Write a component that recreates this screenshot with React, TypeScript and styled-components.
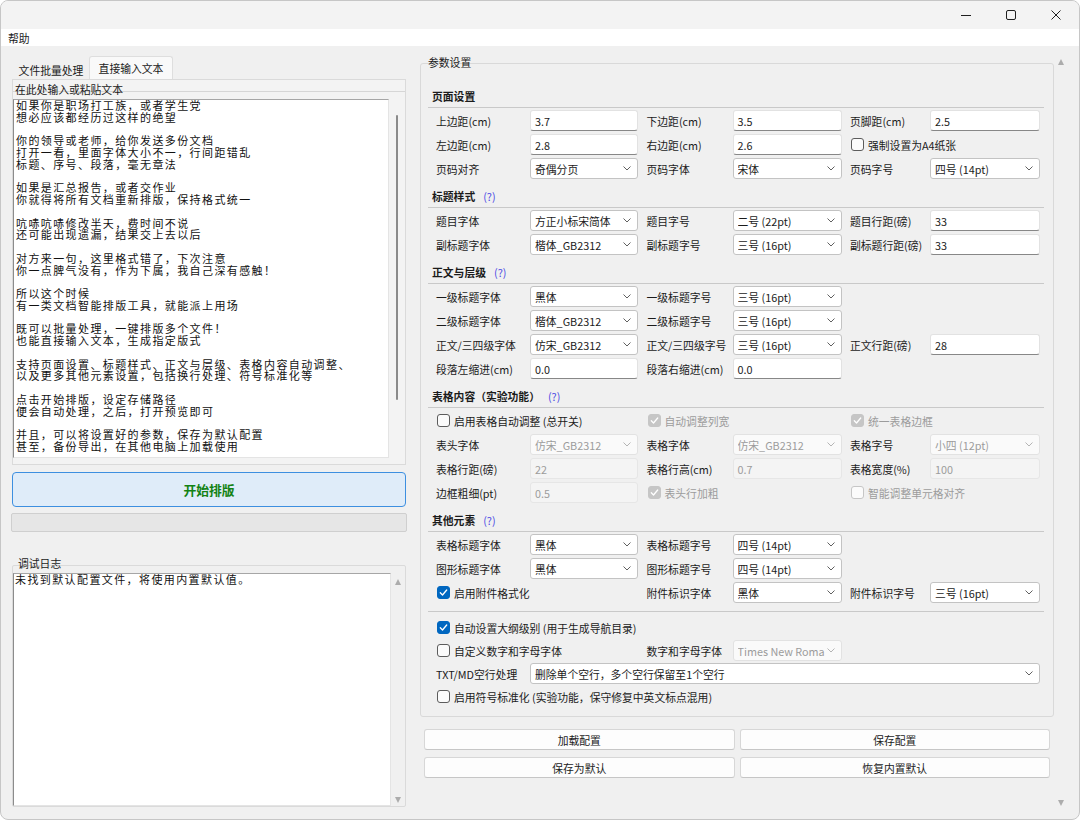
import * as React from "react";
import styled, { createGlobalStyle } from "styled-components";

const uiFont = `"Noto Sans CJK SC", "Noto Sans", sans-serif`;

const GlobalStyle = createGlobalStyle`
  html, body {
    margin: 0;
    padding: 0;
    background: #ffffff;
  }
  body {
    font-family: ${uiFont};
    font-size: 10.8px;
    color: #1b1b1b;
  }
  * {
    box-sizing: border-box;
  }
`;

const Window = styled.div`
  width: 1080px;
  height: 820px;
  border: 1px solid #c6c6c6;
  border-radius: 8px;
  background: #f0f0f0;
  overflow: hidden;
  display: flex;
  flex-direction: column;
`;

const TitleBar = styled.div`
  height: 28px;
  background: #f3f3f3;
  display: flex;
  justify-content: flex-end;
  padding-right: 1px;
`;

const WinButton = styled.div`
  width: 45px;
  display: flex;
  align-items: center;
  justify-content: center;
`;

const MenuBar = styled.div`
  height: 17px;
  background: #ffffff;
  display: flex;
  align-items: center;
  padding-left: 7px;
`;

const Body = styled.div`
  flex: 1;
  display: flex;
  min-height: 0;
`;

/* ---------- left column ---------- */

const LeftCol = styled.div`
  width: 413px;
  padding: 10px 8px 12px 11px;
  display: flex;
  flex-direction: column;
`;

const TabBar = styled.div`
  height: 23px;
  display: flex;
  align-items: flex-end;
  padding-left: 1px;
`;

const Tab = styled.div<{ $active?: boolean; $w: number }>`
  width: ${(p) => p.$w}px;
  height: ${(p) => (p.$active ? 23 : 20)}px;
  display: flex;
  align-items: center;
  justify-content: center;
  background: ${(p) => (p.$active ? "#f9f9f9" : "transparent")};
  border: 1px solid ${(p) => (p.$active ? "#dedede" : "transparent")};
  border-bottom: none;
  border-radius: 3px 3px 0 0;
`;

const Pane = styled.div`
  height: 386px;
  border: 1px solid #dadada;
  background: #f3f3f3;
  padding-top: 11px;
  display: flex;
  flex-direction: column;
`;

const Frame = styled.div`
  position: relative;
  flex: 1;
  display: flex;
  min-height: 0;
  border-top: 1px solid #d6d6d6;
  padding: 7px 0 6px 0;
`;

const Legend = styled.span<{ $left: number; $top: number }>`
  position: absolute;
  top: ${(p) => p.$top}px;
  left: ${(p) => p.$left}px;
  line-height: 13px;
  white-space: nowrap;
`;

const TextBox = styled.div<{ $padLeft: number }>`
  flex: 1;
  background: #ffffff;
  border: 1px solid #e4e4e4;
  border-left-color: #8c8c8c;
  border-top-color: #a6a6a6;
  padding: 0 0 0 ${(p) => p.$padLeft}px;
  font-size: 11px;
  letter-spacing: 1.4px;
  line-height: 11.75px;
  white-space: pre;
  color: #111111;
`;

const ThumbTrack = styled.div`
  width: 16px;
  display: flex;
  justify-content: center;
  padding-top: 16px;
`;

const Thumb = styled.div`
  width: 2px;
  height: 285px;
  border-radius: 1px;
  background: #8a8a8a;
`;

const StartButton = styled.div`
  margin-top: 7px;
  height: 35px;
  background: #dfecf9;
  border: 1px solid #3d8fe0;
  border-radius: 4px;
  display: flex;
  align-items: center;
  justify-content: center;
  color: #138213;
  font-weight: bold;
  font-size: 12.8px;
`;

const Progress = styled.div`
  margin: 6px -1px 0;
  height: 19px;
  background: #e6e6e6;
  border: 1px solid #cfcfcf;
  border-radius: 2px;
`;

const LogGroup = styled.div`
  position: relative;
  margin-top: 33px;
  flex: 1;
  display: flex;
  min-height: 0;
  border: 1px solid #dadada;
  border-radius: 2px;
  padding-top: 7px;
`;

const ArrowCol = styled.div<{ $w: number; $pad: string }>`
  width: ${(p) => p.$w}px;
  display: flex;
  flex-direction: column;
  justify-content: space-between;
  align-items: center;
  padding: ${(p) => p.$pad};
`;

const Arrow = styled.span<{ $down?: boolean }>`
  width: 0;
  height: 0;
  border-left: 3.5px solid transparent;
  border-right: 3.5px solid transparent;
  ${(p) =>
    p.$down
      ? "border-top: 6px solid #acacac;"
      : "border-bottom: 6px solid #acacac;"}
`;

/* ---------- right column ---------- */

const RightCol = styled.div`
  flex: 1;
  display: flex;
  padding-right: 11px;
`;

const ScrollContent = styled.div`
  flex: 1;
  padding: 17px 0 0 6px;
`;

const ParamGroup = styled.div`
  position: relative;
  border: 1px solid #d9d9d9;
  border-radius: 3px;
  padding: 16.5px 9px 8px 7px;
`;

const Section = styled.div`
  margin-top: 5px;
`;

const Heading = styled.div`
  height: 22px;
  border-bottom: 1px solid #c9c9c9;
  display: flex;
  align-items: center;
  padding-left: 4px;
  font-weight: bold;
`;

const Help = styled.span`
  color: #4b4be4;
  font-weight: normal;
  margin-left: 8px;
`;

const Rows = styled.div<{ $rowH: number; $padTop: number }>`
  display: grid;
  grid-template-columns: 202px 195px 190px;
  column-gap: 8.5px;
  grid-auto-rows: ${(p) => p.$rowH}px;
  padding: ${(p) => p.$padTop}px 0 0 8px;
`;

const Separator = styled.div`
  margin-top: 6px;
  border-top: 1px solid #c9c9c9;
`;

const Pair = styled.div<{ $lw: number; $span: number }>`
  display: grid;
  grid-template-columns: ${(p) => p.$lw}px minmax(0, 1fr);
  grid-column: span ${(p) => p.$span};
  align-items: center;
  min-width: 0;
`;

const Label = styled.span`
  white-space: nowrap;
`;

const Edit = styled.div<{ $off?: boolean }>`
  height: 21px;
  display: flex;
  align-items: center;
  padding: 0 4px;
  border-radius: 3px;
  background: ${(p) => (p.$off ? "#f4f4f4" : "#ffffff")};
  border: 1px solid ${(p) => (p.$off ? "#e6e6e6" : "#e2e2e2")};
  border-bottom-color: ${(p) => (p.$off ? "#e6e6e6" : "#878787")};
  color: ${(p) => (p.$off ? "#9c9c9c" : "#1b1b1b")};
`;

const Combo = styled.div<{ $off?: boolean }>`
  height: 21px;
  display: flex;
  align-items: center;
  justify-content: space-between;
  padding: 0 6px 0 4px;
  border-radius: 3px;
  background: ${(p) => (p.$off ? "#fafafa" : "#ffffff")};
  border: 1px solid ${(p) => (p.$off ? "#e2e2e2" : "#c3c3c3")};
  color: ${(p) => (p.$off ? "#9c9c9c" : "#1b1b1b")};
  min-width: 0;
`;

const ComboText = styled.span`
  white-space: nowrap;
  overflow: hidden;
  flex: 1;
  min-width: 0;
`;

const CheckRow = styled.div<{ $off?: boolean; $span: number }>`
  grid-column: span ${(p) => p.$span};
  display: flex;
  align-items: center;
  gap: 4px;
  padding-left: 1px;
  white-space: nowrap;
  color: ${(p) => (p.$off ? "#9c9c9c" : "#1b1b1b")};
`;

const Box = styled.span<{ $on?: boolean; $off?: boolean }>`
  width: 13px;
  height: 13px;
  border-radius: 3px;
  display: flex;
  align-items: center;
  justify-content: center;
  flex-shrink: 0;
  border: 1px solid
    ${(p) => (p.$on ? (p.$off ? "#c6c6c6" : "#0067c0") : p.$off ? "#c6c6c6" : "#5c5c5c")};
  background: ${(p) => (p.$on ? (p.$off ? "#c6c6c6" : "#0067c0") : "#fbfbfb")};
`;

const BtnGrid = styled.div`
  display: grid;
  grid-template-columns: 1fr 1fr;
  gap: 7px 5px;
  margin: 12px 4px 0;
`;

const Btn = styled.div`
  height: 21px;
  display: flex;
  align-items: center;
  justify-content: center;
  background: #fdfdfd;
  border: 1px solid #d7d7d7;
  border-bottom-color: #c6c6c6;
  border-radius: 3px;
`;

/* ---------- data ---------- */

type Cell =
  | { t: "edit"; label: string; value: string; off?: boolean }
  | { t: "combo"; label: string; value: string; off?: boolean; span?: number }
  | { t: "check"; text: string; on?: boolean; off?: boolean; span?: number }
  | { t: "none" };

interface ISection {
  title: string;
  help?: boolean;
  rows: Cell[][];
}

const labelWidths = [94, 86, 80];

const sections: ISection[] = [
  {
    title: "页面设置",
    rows: [
      [
        { t: "edit", label: "上边距(cm)", value: "3.7" },
        { t: "edit", label: "下边距(cm)", value: "3.5" },
        { t: "edit", label: "页脚距(cm)", value: "2.5" },
      ],
      [
        { t: "edit", label: "左边距(cm)", value: "2.8" },
        { t: "edit", label: "右边距(cm)", value: "2.6" },
        { t: "check", text: "强制设置为A4纸张" },
      ],
      [
        { t: "combo", label: "页码对齐", value: "奇偶分页" },
        { t: "combo", label: "页码字体", value: "宋体" },
        { t: "combo", label: "页码字号", value: "四号 (14pt)" },
      ],
    ],
  },
  {
    title: "标题样式",
    help: true,
    rows: [
      [
        { t: "combo", label: "题目字体", value: "方正小标宋简体" },
        { t: "combo", label: "题目字号", value: "二号 (22pt)" },
        { t: "edit", label: "题目行距(磅)", value: "33" },
      ],
      [
        { t: "combo", label: "副标题字体", value: "楷体_GB2312" },
        { t: "combo", label: "副标题字号", value: "三号 (16pt)" },
        { t: "edit", label: "副标题行距(磅)", value: "33" },
      ],
    ],
  },
  {
    title: "正文与层级",
    help: true,
    rows: [
      [
        { t: "combo", label: "一级标题字体", value: "黑体" },
        { t: "combo", label: "一级标题字号", value: "三号 (16pt)" },
        { t: "none" },
      ],
      [
        { t: "combo", label: "二级标题字体", value: "楷体_GB2312" },
        { t: "combo", label: "二级标题字号", value: "三号 (16pt)" },
        { t: "none" },
      ],
      [
        { t: "combo", label: "正文/三四级字体", value: "仿宋_GB2312" },
        { t: "combo", label: "正文/三四级字号", value: "三号 (16pt)" },
        { t: "edit", label: "正文行距(磅)", value: "28" },
      ],
      [
        { t: "edit", label: "段落左缩进(cm)", value: "0.0" },
        { t: "edit", label: "段落右缩进(cm)", value: "0.0" },
        { t: "none" },
      ],
    ],
  },
  {
    title: "表格内容（实验功能）",
    help: true,
    rows: [
      [
        { t: "check", text: "启用表格自动调整 (总开关)" },
        { t: "check", text: "自动调整列宽", on: true, off: true },
        { t: "check", text: "统一表格边框", on: true, off: true },
      ],
      [
        { t: "combo", label: "表头字体", value: "仿宋_GB2312", off: true },
        { t: "combo", label: "表格字体", value: "仿宋_GB2312", off: true },
        { t: "combo", label: "表格字号", value: "小四 (12pt)", off: true },
      ],
      [
        { t: "edit", label: "表格行距(磅)", value: "22", off: true },
        { t: "edit", label: "表格行高(cm)", value: "0.7", off: true },
        { t: "edit", label: "表格宽度(%)", value: "100", off: true },
      ],
      [
        { t: "edit", label: "边框粗细(pt)", value: "0.5", off: true },
        { t: "check", text: "表头行加粗", on: true, off: true },
        { t: "check", text: "智能调整单元格对齐", off: true },
      ],
    ],
  },
  {
    title: "其他元素",
    help: true,
    rows: [
      [
        { t: "combo", label: "表格标题字体", value: "黑体" },
        { t: "combo", label: "表格标题字号", value: "四号 (14pt)" },
        { t: "none" },
      ],
      [
        { t: "combo", label: "图形标题字体", value: "黑体" },
        { t: "combo", label: "图形标题字号", value: "四号 (14pt)" },
        { t: "none" },
      ],
      [
        { t: "check", text: "启用附件格式化", on: true },
        { t: "combo", label: "附件标识字体", value: "黑体" },
        { t: "combo", label: "附件标识字号", value: "三号 (16pt)" },
      ],
    ],
  },
];

const extraRows: Cell[][] = [
  [{ t: "check", text: "自动设置大纲级别 (用于生成导航目录)", on: true, span: 3 }],
  [
    { t: "check", text: "自定义数字和字母字体" },
    { t: "combo", label: "数字和字母字体", value: "Times New Roma", off: true },
    { t: "none" },
  ],
  [
    {
      t: "combo",
      label: "TXT/MD空行处理",
      value: "删除单个空行，多个空行保留至1个空行",
      span: 3,
    },
  ],
  [{ t: "check", text: "启用符号标准化 (实验功能，保守修复中英文标点混用)", span: 3 }],
];

const inputText = [
  "如果你是职场打工族，或者学生党",
  "想必应该都经历过这样的绝望",
  "",
  "你的领导或老师，给你发送多份文档",
  "打开一看，里面字体大小不一，行间距错乱",
  "标题、序号、段落，毫无章法",
  "",
  "如果是汇总报告，或者交作业",
  "你就得将所有文档重新排版，保持格式统一",
  "",
  "吭哧吭哧修改半天，费时间不说",
  "还可能出现遗漏，结果交上去以后",
  "",
  "对方来一句，这里格式错了，下次注意",
  "你一点脾气没有，作为下属，我自己深有感触！",
  "",
  "所以这个时候",
  "有一类文档智能排版工具，就能派上用场",
  "",
  "既可以批量处理，一键排版多个文件！",
  "也能直接输入文本，生成指定版式",
  "",
  "支持页面设置、标题样式、正文与层级、表格内容自动调整、",
  "以及更多其他元素设置，包括换行处理、符号标准化等",
  "",
  "点击开始排版，设定存储路径",
  "便会自动处理，之后，打开预览即可",
  "",
  "并且，可以将设置好的参数，保存为默认配置",
  "甚至，备份导出，在其他电脑上加载使用",
].join("\n");

/* ---------- small parts ---------- */

const Chevron: React.FC<{ off?: boolean }> = ({ off }) => (
  <svg width="8" height="5" viewBox="0 0 8 5" style={{ flexShrink: 0 }}>
    <polyline
      points="0.5,0.5 4,4 7.5,0.5"
      fill="none"
      stroke={off ? "#b4b4b4" : "#606060"}
      strokeWidth="1"
    />
  </svg>
);

const Tick = () => (
  <svg width="9" height="9" viewBox="0 0 9 9">
    <polyline
      points="1.3,4.8 3.5,7 7.7,2"
      fill="none"
      stroke="#ffffff"
      strokeWidth="1.3"
      strokeLinecap="round"
      strokeLinejoin="round"
    />
  </svg>
);

const CellView: React.FC<{ cell: Cell; col: number }> = ({ cell, col }) => {
  if (cell.t === "none") return <div />;
  if (cell.t === "check") {
    return (
      <CheckRow $off={cell.off} $span={cell.span ?? 1}>
        <Box $on={cell.on} $off={cell.off}>
          {cell.on && <Tick />}
        </Box>
        {cell.text}
      </CheckRow>
    );
  }
  const span = cell.t === "combo" ? cell.span ?? 1 : 1;
  return (
    <Pair $lw={labelWidths[col]} $span={span}>
      <Label>{cell.label}</Label>
      {cell.t === "edit" ? (
        <Edit $off={cell.off}>{cell.value}</Edit>
      ) : (
        <Combo $off={cell.off}>
          <ComboText>{cell.value}</ComboText>
          <Chevron off={cell.off} />
        </Combo>
      )}
    </Pair>
  );
};

const RowsView: React.FC<{ rows: Cell[][]; rowH: number; padTop: number }> = ({
  rows,
  rowH,
  padTop,
}) => (
  <Rows $rowH={rowH} $padTop={padTop}>
    {rows.map((row, r) => {
      let col = 0;
      return row.map((cell, i) => {
        const view = <CellView key={`${r}-${i}`} cell={cell} col={col} />;
        col += cell.t === "none" || cell.t === "edit" ? 1 : cell.span ?? 1;
        return view;
      });
    })}
  </Rows>
);

const App: React.FC = () => (
  <>
    <GlobalStyle />
    <Window>
      <TitleBar>
        <WinButton>
          <svg width="10" height="10" viewBox="0 0 10 10">
            <line x1="0" y1="5.5" x2="10" y2="5.5" stroke="#1f1f1f" strokeWidth="1" />
          </svg>
        </WinButton>
        <WinButton>
          <svg width="10" height="10" viewBox="0 0 10 10">
            <rect x="0.5" y="0.5" width="9" height="9" rx="1.5" fill="none" stroke="#1f1f1f" strokeWidth="1" />
          </svg>
        </WinButton>
        <WinButton>
          <svg width="10" height="10" viewBox="0 0 10 10">
            <path d="M0.5 0.5 L9.5 9.5 M9.5 0.5 L0.5 9.5" stroke="#1f1f1f" strokeWidth="1" />
          </svg>
        </WinButton>
      </TitleBar>
      <MenuBar>帮助</MenuBar>
      <Body>
        <LeftCol>
          <TabBar>
            <Tab $w={76}>文件批量处理</Tab>
            <Tab $w={84} $active>
              直接输入文本
            </Tab>
          </TabBar>
          <Pane>
            <Frame>
              <Legend $left={2} $top={-9}>
                在此处输入或粘贴文本
              </Legend>
              <TextBox $padLeft={2}>{inputText}</TextBox>
              <ThumbTrack>
                <Thumb />
              </ThumbTrack>
            </Frame>
          </Pane>
          <StartButton>开始排版</StartButton>
          <Progress />
          <LogGroup>
            <Legend $left={5} $top={-9}>
              调试日志
            </Legend>
            <TextBox $padLeft={1}>未找到默认配置文件，将使用内置默认值。</TextBox>
            <ArrowCol $w={14} $pad="6px 0 3px">
              <Arrow />
              <Arrow $down />
            </ArrowCol>
          </LogGroup>
        </LeftCol>
        <RightCol>
          <ScrollContent>
            <ParamGroup>
              <Legend $left={7} $top={-8}>
                参数设置
              </Legend>
              {sections.map((s) => (
                <Section key={s.title}>
                  <Heading>
                    {s.title}
                    {s.help && <Help>(?)</Help>}
                  </Heading>
                  <RowsView rows={s.rows} rowH={24} padTop={1} />
                </Section>
              ))}
              <Separator />
              <RowsView rows={extraRows} rowH={23} padTop={4.5} />
            </ParamGroup>
            <BtnGrid>
              <Btn>加载配置</Btn>
              <Btn>保存配置</Btn>
              <Btn>保存为默认</Btn>
              <Btn>恢复内置默认</Btn>
            </BtnGrid>
          </ScrollContent>
          <ArrowCol $w={14} $pad="13px 0 13px">
            <Arrow />
            <Arrow $down />
          </ArrowCol>
        </RightCol>
      </Body>
    </Window>
  </>
);

export default App;
